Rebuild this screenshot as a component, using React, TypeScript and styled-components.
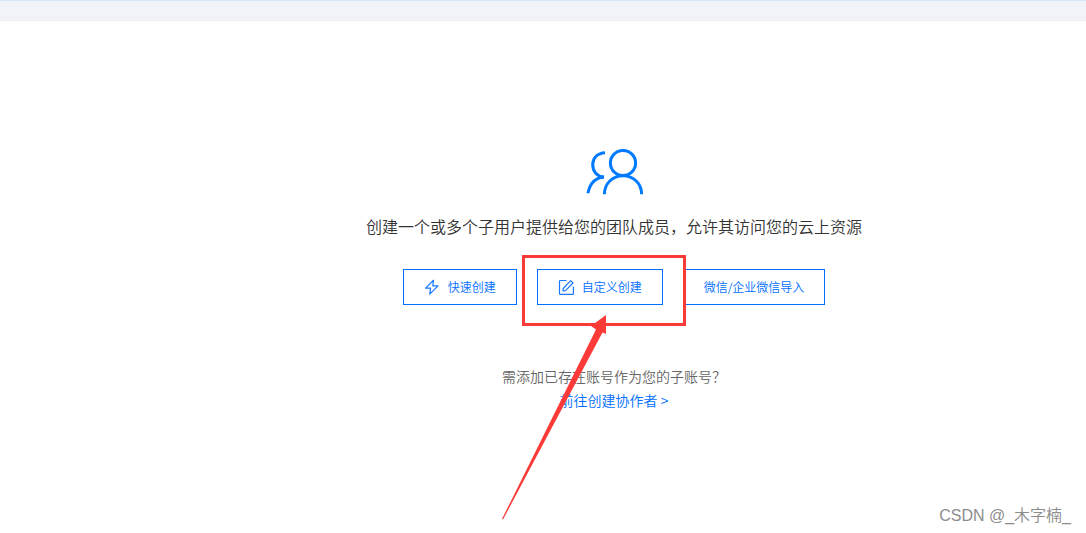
import React from 'react';
import styled, { createGlobalStyle } from 'styled-components';

const Global = createGlobalStyle`
  * { box-sizing: border-box; }
  body {
    margin: 0;
    background: #fff;
    font-family: "Noto Sans CJK SC", "Liberation Sans", sans-serif;
    font-weight: 350;
  }
  p { margin: 0; }
`;

const Page = styled.div`
  position: relative;
  min-height: 100vh;
`;

const TopBar = styled.header`
  height: 21px;
  background: #f2f3f8;
  border-top: 1px solid #d5e5fd;
  border-bottom: 1px solid #ededf2;
`;

const Main = styled.main`
  display: flex;
  flex-direction: column;
  align-items: center;
  padding: 128px 0 0 142px;
`;

const UsersIcon = styled.svg`
  width: 58px;
  height: 46px;
`;

const Intro = styled.p`
  margin-top: 20px;
  font-size: 16px;
  line-height: 22px;
  color: #333;
`;

const Actions = styled.div`
  display: flex;
  gap: 20px;
  margin-top: 32px;
`;

const ActionButton = styled.button`
  display: flex;
  align-items: center;
  gap: 8px;
  height: 36px;
  padding: 0 20px;
  border: 1px solid #006eff;
  background: #fff;
  color: #006eff;
  font-family: inherit;
  font-size: 12px;
  font-weight: inherit;
  line-height: 18px;
  white-space: nowrap;
  cursor: pointer;
`;

const ButtonIcon = styled.svg`
  width: 16px;
  height: 16px;
  flex: none;
`;

const Highlighted = styled.div`
  position: relative;
`;

const HighlightBox = styled.div`
  position: absolute;
  top: -14px;
  right: -23px;
  bottom: -21px;
  left: -15px;
  z-index: 1;
  border: 3px solid #fc3a38;
  pointer-events: none;
`;

const Arrow = styled.svg`
  position: absolute;
  top: 45px;
  left: -37px;
  z-index: 2;
  width: 110px;
  height: 208px;
  pointer-events: none;
`;

const Hint = styled.div`
  margin-top: 59px;
  font-size: 14px;
  line-height: 24px;
  text-align: center;
  color: #666;
`;

const HintLink = styled.a`
  color: #006eff;
  text-decoration: none;
`;

const Watermark = styled.div`
  position: absolute;
  right: 15px;
  bottom: 5px;
  font-family: "Liberation Sans", "Noto Sans CJK SC", sans-serif;
  font-size: 16px;
  line-height: 24px;
  color: #8c8c8c;
`;

export default function App() {
  return (
    <Page>
      <Global />
      <TopBar />
      <Main>
        <UsersIcon viewBox="0 0 58 46" fill="none" stroke="#007bff" strokeWidth="3" aria-hidden="true">
          <circle cx="38" cy="14" r="12.6" />
          <path d="M19.4 45.3C19.4 34.5 27.5 26.8 38 26.8S56.6 34.5 56.6 45.3" />
          <path d="M20 3.7C12.5 4 7.7 9 7.7 15.6C7.7 22.5 12 27.700 19 28.1" />
          <path d="M19 28.1C10.500 28.700 5 34.500 2.900 44.200" />
        </UsersIcon>
        <Intro>创建一个或多个子用户提供给您的团队成员，允许其访问您的云上资源</Intro>
        <Actions>
          <ActionButton type="button">
            <ButtonIcon viewBox="0 0 16 16" fill="none" stroke="#1a78ff" strokeWidth="1.2" strokeLinejoin="round" aria-hidden="true">
              <path d="M9.5 1.3L1.600 9.1H6.6L5.700 15.1L14 6.8H8.800Z" />
            </ButtonIcon>
            快速创建
          </ActionButton>
          <Highlighted>
            <ActionButton type="button">
              <ButtonIcon viewBox="0 0 16 16" fill="none" stroke="#1a78ff" strokeWidth="1.2" strokeLinejoin="round" aria-hidden="true">
                <path d="M8.5 1.500H2.500Q1.500 1.500 1.500 2.500V14.500Q1.500 15.400 2.500 15.400H14.400Q15.400 15.400 15.400 14.500V7.500" />
                <path d="M5.200 9.500L12.700 1.700L15 4L7.500 11.700L5 12Z" />
              </ButtonIcon>
              自定义创建
            </ActionButton>
            <HighlightBox />
            <Arrow viewBox="0 0 110 208" aria-hidden="true">
              <path d="M106 1L91 12L96 15.500L2 205L3 205.500L102.500 18.500L106 20Z" fill="#fc3a38" />
            </Arrow>
          </Highlighted>
          <ActionButton type="button">微信/企业微信导入</ActionButton>
        </Actions>
        <Hint>
          <p>需添加已存在账号作为您的子账号？</p>
          <HintLink href="#collaborator">前往创建协作者 &gt;</HintLink>
        </Hint>
      </Main>
      <Watermark>CSDN @_木字楠_</Watermark>
    </Page>
  );
}
